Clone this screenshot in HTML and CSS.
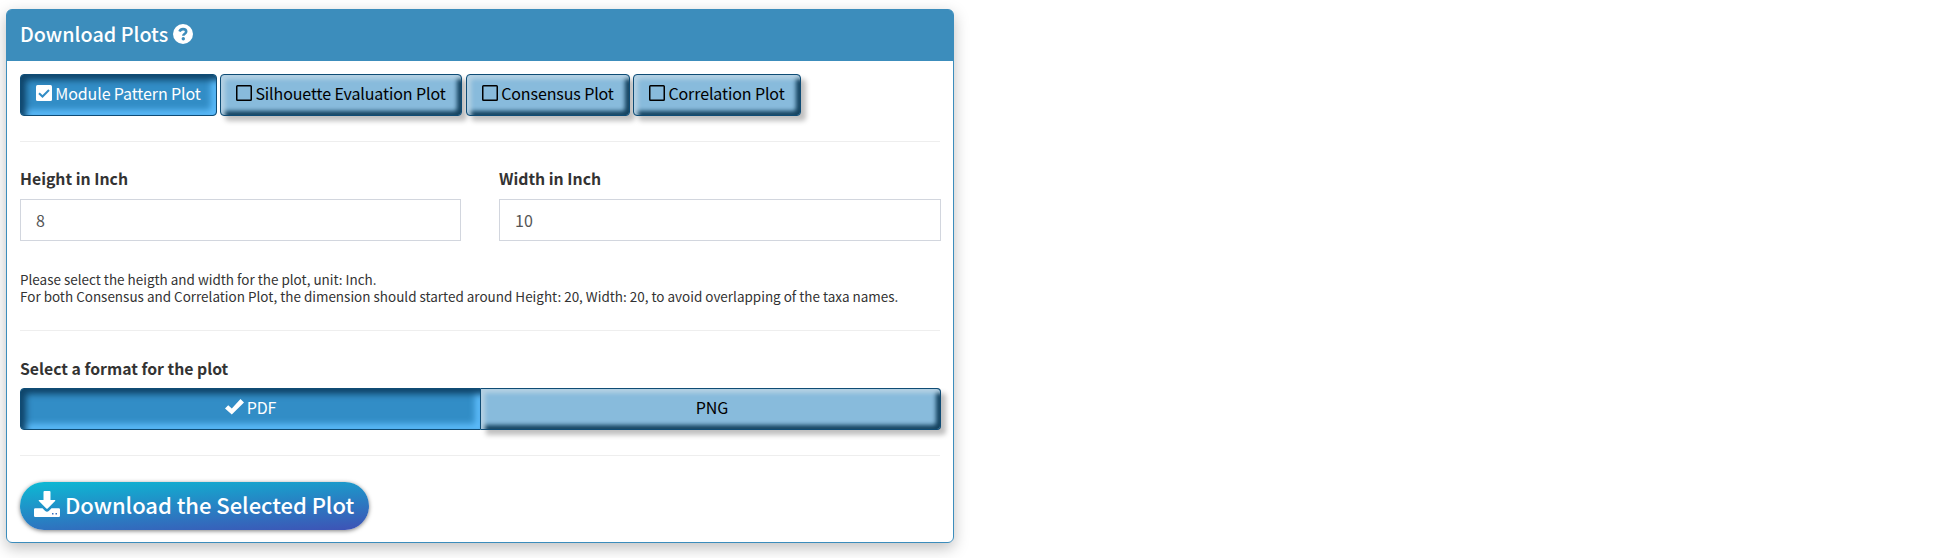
FILE: index.html
```html
<!DOCTYPE html>
<html lang="en">
<head>
<meta charset="utf-8">
<title>Download Plots</title>
<link rel="stylesheet" href="styles.css">
</head>
<body>
<section class="card">
  <header class="card-header">
    <h3 class="card-title">Download Plots</h3>
    <svg class="help-icon" viewBox="0 0 20 20"><circle cx="10" cy="10" r="10" fill="#fff"/><path d="M6.500 7.600C7.200 5.900 8.300 5.100 10 5.100c1.900 0 3.200 1.100 3.200 2.600 0 2-2.900 2-2.900 4" fill="none" stroke="#3c8dbc" stroke-width="2.600"/><circle cx="10.300" cy="14.800" r="1.700" fill="#3c8dbc"/></svg>
  </header>
  <div class="card-body">
    <div class="plots">
      <button class="btn active plot-module"><svg class="box" viewBox="0 0 16 16"><rect width="16" height="16" rx="1.500" fill="#fff"/><path d="M3 8.200l3.500 3.300L13 5" fill="none" stroke="#328dc6" stroke-width="2"/></svg><span>Module Pattern Plot</span></button>
      <button class="btn plot-silhouette"><svg class="box" viewBox="0 0 16 16"><rect x=".75" y=".75" width="14.500" height="14.500" rx=".8" fill="none" stroke="#000" stroke-width="1.500"/></svg><span>Silhouette Evaluation Plot</span></button>
      <button class="btn plot-consensus"><svg class="box" viewBox="0 0 16 16"><rect x=".75" y=".75" width="14.500" height="14.500" rx=".8" fill="none" stroke="#000" stroke-width="1.500"/></svg><span>Consensus Plot</span></button>
      <button class="btn plot-correlation"><svg class="box" viewBox="0 0 16 16"><rect x=".75" y=".75" width="14.500" height="14.500" rx=".8" fill="none" stroke="#000" stroke-width="1.500"/></svg><span>Correlation Plot</span></button>
    </div>
    <hr class="rule">
    <div class="fields">
      <div class="field"><label class="label" for="h">Height in Inch</label><input class="input" id="h" type="text" value="8"></div>
      <div class="field"><label class="label" for="w">Width in Inch</label><input class="input" id="w" type="text" value="10"></div>
    </div>
    <p class="note">Please select the heigth and width for the plot, unit: Inch.<br>For both Consensus and Correlation Plot, the dimension should started around Height: 20, Width: 20, to avoid overlapping of the taxa names.</p>
    <hr class="rule">
    <div class="label format-label">Select a format for the plot</div>
    <div class="formats">
      <button class="btn active"><svg class="tick" viewBox="0 0 19 16"><path d="M0 9.500L3.200 6.300 6.800 9.500 15.500 0 19 3.400 6.800 15.500z" fill="#fff"/></svg><span>PDF</span></button>
      <button class="btn"><span>PNG</span></button>
    </div>
    <hr class="rule">
    <button class="download"><svg class="download-icon" viewBox="0 0 26 26"><path d="M10.500 0h5a1 1 0 0 1 1 1v8h4.200q1.200 0 .4 1l-7.400 7.500q-.7.600-1.400 0L4.900 10q-.8-1 .4-1h4.200V1a1 1 0 0 1 1-1z" fill="#fff"/><path d="M1.200 17.300h7.300l2.700 2.600q1.800 1.500 3.600 0l2.700-2.600h7.300q1.200 0 1.200 1.200v6.300q0 1.200-1.200 1.200H1.200Q0 26 0 24.800v-6.300q0-1.200 1.200-1.200z" fill="#fff"/><path d="M18 22h1.500v1.500H18zM21.500 22H23v1.500h-1.500z" fill="#3b72bf"/></svg><span>Download the Selected Plot</span></button>
  </div>
</section>
</body>
</html>
```
FILE: styles.css
```css
* { box-sizing: border-box; }
body {
  margin: 0;
  min-height: 558px;
  padding: 9px 6px;
  background: #fff;
  color: #333;
  font-family: "Noto Sans CJK SC", "Noto Sans", sans-serif;
  font-size: 16px;
  white-space: nowrap;
}
button, input { font: inherit; margin: 0; }
.card {
  width: 948px;
  height: 534px;
  border: 1px solid #3c8dbc;
  border-radius: 6px;
  box-shadow: 0 5px 15px rgba(0, 0, 0, .25);
}
.card-header {
  display: flex;
  align-items: center;
  gap: 5px;
  height: 51px;
  padding: 0 13px 3px;
  background: #3c8dbc;
  color: #fff;
  border-radius: 4px 4px 0 0;
}
.card-title { margin: 0; font-size: 19.800px; font-weight: 500; line-height: 24px; }
.help-icon { width: 20px; height: 20px; }
.card-body { padding: 13px; }
.plots { display: flex; }
.btn {
  display: flex;
  align-items: center;
  justify-content: center;
  gap: 3px;
  height: 42px;
  padding: 0 0 4px;
  border: 1px solid #0f4c75;
  border-radius: 4px;
  background: #88bbdc;
  color: #000;
  letter-spacing: -.11px;
  line-height: 24px;
  box-shadow: inset 4px 4px 4px #b5d1e3, inset -4px -4px 4px #154360, 5px 5px 5px rgba(0, 0, 0, .25);
}
.btn.active {
  background: #328dc6;
  color: #fff;
  box-shadow: inset 5px 5px 6px #0f4469, inset -5px -5px 6px #5dbcfb;
}
.plot-module { width: 197px; margin-right: 3px; }
.plot-silhouette { width: 242px; margin-right: 4px; }
.plot-consensus { width: 164px; margin-right: 3px; }
.plot-correlation { width: 168px; }
.box { width: 16px; height: 16px; }
.rule { height: 1px; margin: 25px 0 24px; border: 0; background: #eee; }
.fields { display: grid; grid-template-columns: 441px 442px; gap: 38px; }
.label {
  display: block;
  height: 26px;
  margin-bottom: 7px;
  line-height: 25px;
  font-weight: 700;
  font-size: 15.800px;
}
.format-label { line-height: 27px; }
.input {
  display: block;
  width: 100%;
  height: 42px;
  padding: 0 15px 1px;
  border: 1px solid #d2d6de;
  background: #fff;
  color: #555;
  outline: 0;
}
.note { margin: 30px 0 0; font-size: 13.470px; line-height: 17px; }
.formats { display: grid; grid-template-columns: 461px 460px; }
.formats .btn:first-child { border-radius: 4px 0 0 4px; }
.formats .btn:last-child { padding-left: 3px; border-radius: 0 4px 4px 0; border-left: 0; }
.tick { width: 19px; height: 16px; }
.download {
  display: flex;
  align-items: center;
  gap: 5px;
  width: 349px;
  height: 48px;
  margin-top: 26px;
  padding: 0 0 4px 14px;
  border: 0;
  border-radius: 24px;
  background: linear-gradient(176deg, #0cbad4, #3f51b5);
  color: #fff;
  font-size: 22px;
  font-weight: 500;
  letter-spacing: -.03px;
  line-height: 30px;
  box-shadow: 0 1px 4px rgba(0, 0, 0, .5);
}
.download-icon { width: 26px; height: 26px; }
```
